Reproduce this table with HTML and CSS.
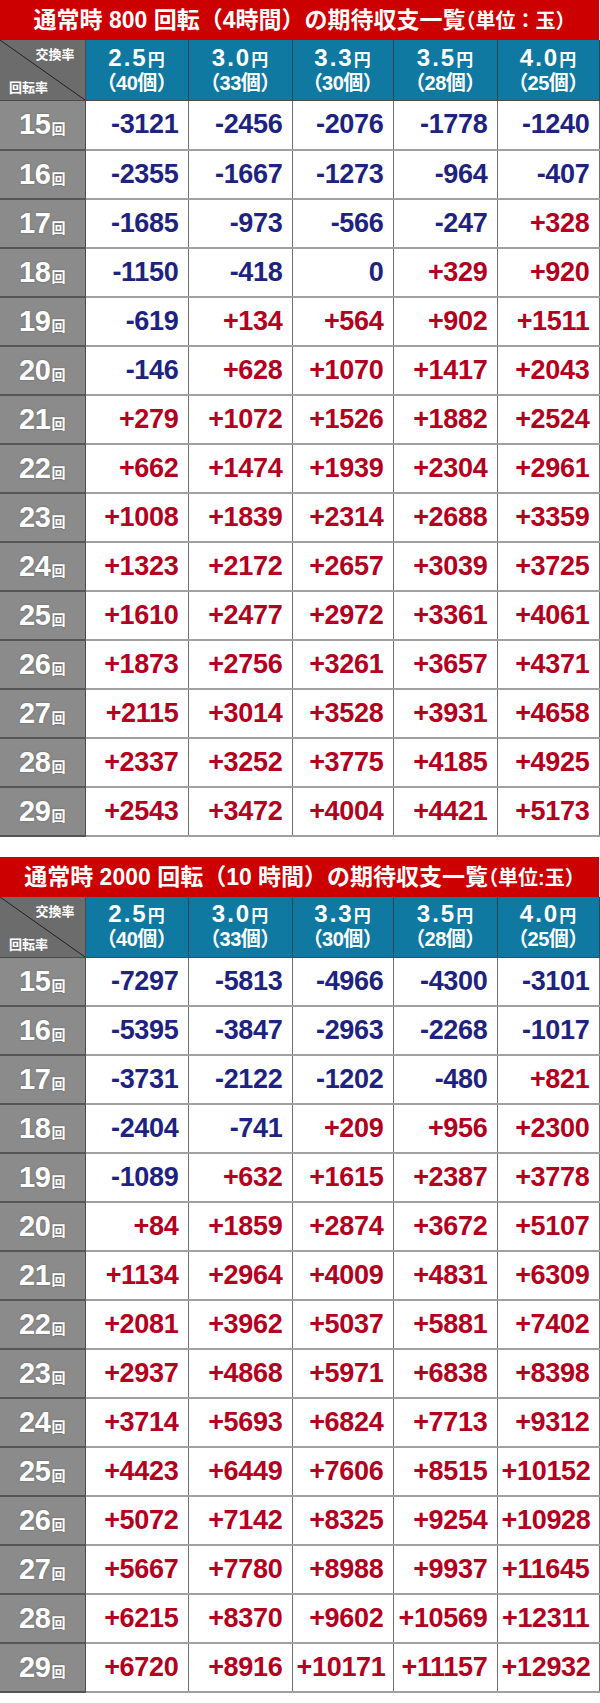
FILE: index.html
```html
<!DOCTYPE html>
<html lang="ja">
<head>
<meta charset="utf-8">
<title>期待収支一覧</title>
<link rel="stylesheet" href="styles.css">
</head>
<body>
<div class="page">
  <section class="block">
    <h2 class="title">通常時 800 回転（4時間）の期待収支一覧<span class="unit">（単位：玉）</span></h2>
    <table class="grid">
      <colgroup><col class="c0"><col class="c1"><col class="c2"><col class="c3"><col class="c4"><col class="c5"></colgroup>
      <thead>
        <tr>
          <th class="corner"><div class="corner-in"><span class="c-top">交換率</span><span class="c-bot">回転率</span></div></th>
          <th class="rate"><span class="l1"><span class="big">2.5</span><span class="yen">円</span></span><span class="l2">（40個）</span></th>
          <th class="rate"><span class="l1"><span class="big">3.0</span><span class="yen">円</span></span><span class="l2">（33個）</span></th>
          <th class="rate"><span class="l1"><span class="big">3.3</span><span class="yen">円</span></span><span class="l2">（30個）</span></th>
          <th class="rate"><span class="l1"><span class="big">3.5</span><span class="yen">円</span></span><span class="l2">（28個）</span></th>
          <th class="rate"><span class="l1"><span class="big">4.0</span><span class="yen">円</span></span><span class="l2">（25個）</span></th>
        </tr>
      </thead>
      <tbody>
        <tr><th class="lbl"><span class="n">15</span><span class="kai">回</span></th><td class="neg">-3121</td><td class="neg">-2456</td><td class="neg">-2076</td><td class="neg">-1778</td><td class="neg">-1240</td></tr>
        <tr><th class="lbl"><span class="n">16</span><span class="kai">回</span></th><td class="neg">-2355</td><td class="neg">-1667</td><td class="neg">-1273</td><td class="neg">-964</td><td class="neg">-407</td></tr>
        <tr><th class="lbl"><span class="n">17</span><span class="kai">回</span></th><td class="neg">-1685</td><td class="neg">-973</td><td class="neg">-566</td><td class="neg">-247</td><td class="pos">+328</td></tr>
        <tr><th class="lbl"><span class="n">18</span><span class="kai">回</span></th><td class="neg">-1150</td><td class="neg">-418</td><td class="neg">0</td><td class="pos">+329</td><td class="pos">+920</td></tr>
        <tr><th class="lbl"><span class="n">19</span><span class="kai">回</span></th><td class="neg">-619</td><td class="pos">+134</td><td class="pos">+564</td><td class="pos">+902</td><td class="pos">+1511</td></tr>
        <tr><th class="lbl"><span class="n">20</span><span class="kai">回</span></th><td class="neg">-146</td><td class="pos">+628</td><td class="pos">+1070</td><td class="pos">+1417</td><td class="pos">+2043</td></tr>
        <tr><th class="lbl"><span class="n">21</span><span class="kai">回</span></th><td class="pos">+279</td><td class="pos">+1072</td><td class="pos">+1526</td><td class="pos">+1882</td><td class="pos">+2524</td></tr>
        <tr><th class="lbl"><span class="n">22</span><span class="kai">回</span></th><td class="pos">+662</td><td class="pos">+1474</td><td class="pos">+1939</td><td class="pos">+2304</td><td class="pos">+2961</td></tr>
        <tr><th class="lbl"><span class="n">23</span><span class="kai">回</span></th><td class="pos">+1008</td><td class="pos">+1839</td><td class="pos">+2314</td><td class="pos">+2688</td><td class="pos">+3359</td></tr>
        <tr><th class="lbl"><span class="n">24</span><span class="kai">回</span></th><td class="pos">+1323</td><td class="pos">+2172</td><td class="pos">+2657</td><td class="pos">+3039</td><td class="pos">+3725</td></tr>
        <tr><th class="lbl"><span class="n">25</span><span class="kai">回</span></th><td class="pos">+1610</td><td class="pos">+2477</td><td class="pos">+2972</td><td class="pos">+3361</td><td class="pos">+4061</td></tr>
        <tr><th class="lbl"><span class="n">26</span><span class="kai">回</span></th><td class="pos">+1873</td><td class="pos">+2756</td><td class="pos">+3261</td><td class="pos">+3657</td><td class="pos">+4371</td></tr>
        <tr><th class="lbl"><span class="n">27</span><span class="kai">回</span></th><td class="pos">+2115</td><td class="pos">+3014</td><td class="pos">+3528</td><td class="pos">+3931</td><td class="pos">+4658</td></tr>
        <tr><th class="lbl"><span class="n">28</span><span class="kai">回</span></th><td class="pos">+2337</td><td class="pos">+3252</td><td class="pos">+3775</td><td class="pos">+4185</td><td class="pos">+4925</td></tr>
        <tr><th class="lbl"><span class="n">29</span><span class="kai">回</span></th><td class="pos">+2543</td><td class="pos">+3472</td><td class="pos">+4004</td><td class="pos">+4421</td><td class="pos">+5173</td></tr>
      </tbody>
    </table>
  </section>

  <section class="block">
    <h2 class="title">通常時 2000 回転（10 時間）の期待収支一覧<span class="unit">（単位:玉）</span></h2>
    <table class="grid">
      <colgroup><col class="c0"><col class="c1"><col class="c2"><col class="c3"><col class="c4"><col class="c5"></colgroup>
      <thead>
        <tr>
          <th class="corner"><div class="corner-in"><span class="c-top">交換率</span><span class="c-bot">回転率</span></div></th>
          <th class="rate"><span class="l1"><span class="big">2.5</span><span class="yen">円</span></span><span class="l2">（40個）</span></th>
          <th class="rate"><span class="l1"><span class="big">3.0</span><span class="yen">円</span></span><span class="l2">（33個）</span></th>
          <th class="rate"><span class="l1"><span class="big">3.3</span><span class="yen">円</span></span><span class="l2">（30個）</span></th>
          <th class="rate"><span class="l1"><span class="big">3.5</span><span class="yen">円</span></span><span class="l2">（28個）</span></th>
          <th class="rate"><span class="l1"><span class="big">4.0</span><span class="yen">円</span></span><span class="l2">（25個）</span></th>
        </tr>
      </thead>
      <tbody>
        <tr><th class="lbl"><span class="n">15</span><span class="kai">回</span></th><td class="neg">-7297</td><td class="neg">-5813</td><td class="neg">-4966</td><td class="neg">-4300</td><td class="neg">-3101</td></tr>
        <tr><th class="lbl"><span class="n">16</span><span class="kai">回</span></th><td class="neg">-5395</td><td class="neg">-3847</td><td class="neg">-2963</td><td class="neg">-2268</td><td class="neg">-1017</td></tr>
        <tr><th class="lbl"><span class="n">17</span><span class="kai">回</span></th><td class="neg">-3731</td><td class="neg">-2122</td><td class="neg">-1202</td><td class="neg">-480</td><td class="pos">+821</td></tr>
        <tr><th class="lbl"><span class="n">18</span><span class="kai">回</span></th><td class="neg">-2404</td><td class="neg">-741</td><td class="pos">+209</td><td class="pos">+956</td><td class="pos">+2300</td></tr>
        <tr><th class="lbl"><span class="n">19</span><span class="kai">回</span></th><td class="neg">-1089</td><td class="pos">+632</td><td class="pos">+1615</td><td class="pos">+2387</td><td class="pos">+3778</td></tr>
        <tr><th class="lbl"><span class="n">20</span><span class="kai">回</span></th><td class="pos">+84</td><td class="pos">+1859</td><td class="pos">+2874</td><td class="pos">+3672</td><td class="pos">+5107</td></tr>
        <tr><th class="lbl"><span class="n">21</span><span class="kai">回</span></th><td class="pos">+1134</td><td class="pos">+2964</td><td class="pos">+4009</td><td class="pos">+4831</td><td class="pos">+6309</td></tr>
        <tr><th class="lbl"><span class="n">22</span><span class="kai">回</span></th><td class="pos">+2081</td><td class="pos">+3962</td><td class="pos">+5037</td><td class="pos">+5881</td><td class="pos">+7402</td></tr>
        <tr><th class="lbl"><span class="n">23</span><span class="kai">回</span></th><td class="pos">+2937</td><td class="pos">+4868</td><td class="pos">+5971</td><td class="pos">+6838</td><td class="pos">+8398</td></tr>
        <tr><th class="lbl"><span class="n">24</span><span class="kai">回</span></th><td class="pos">+3714</td><td class="pos">+5693</td><td class="pos">+6824</td><td class="pos">+7713</td><td class="pos">+9312</td></tr>
        <tr><th class="lbl"><span class="n">25</span><span class="kai">回</span></th><td class="pos">+4423</td><td class="pos">+6449</td><td class="pos">+7606</td><td class="pos">+8515</td><td class="pos">+10152</td></tr>
        <tr><th class="lbl"><span class="n">26</span><span class="kai">回</span></th><td class="pos">+5072</td><td class="pos">+7142</td><td class="pos">+8325</td><td class="pos">+9254</td><td class="pos">+10928</td></tr>
        <tr><th class="lbl"><span class="n">27</span><span class="kai">回</span></th><td class="pos">+5667</td><td class="pos">+7780</td><td class="pos">+8988</td><td class="pos">+9937</td><td class="pos">+11645</td></tr>
        <tr><th class="lbl"><span class="n">28</span><span class="kai">回</span></th><td class="pos">+6215</td><td class="pos">+8370</td><td class="pos">+9602</td><td class="pos">+10569</td><td class="pos">+12311</td></tr>
        <tr><th class="lbl"><span class="n">29</span><span class="kai">回</span></th><td class="pos">+6720</td><td class="pos">+8916</td><td class="pos">+10171</td><td class="pos">+11157</td><td class="pos">+12932</td></tr>
      </tbody>
    </table>
  </section>
</div>
</body>
</html>
```
FILE: styles.css
```css
html, body {
  margin: 0;
  padding: 0;
  background: #ffffff;
}
body {
  font-family: "Liberation Sans", "Noto Sans CJK JP", sans-serif;
  font-weight: bold;
}
.page {
  width: 599px;
}
.block + .block {
  margin-top: 20px;
}
.title {
  margin: 0;
  height: 40px;
  background: #cc0000;
  color: #ffffff;
  font-size: 23px;
  line-height: 40px;
  font-weight: bold;
  text-align: center;
  white-space: nowrap;
  overflow: hidden;
}
.unit {
  font-size: 20px;
  margin-left: -10px;
  margin-right: -10px;
}
.grid {
  width: 599px;
  table-layout: fixed;
  border-collapse: collapse;
  border-spacing: 0;
}
.c0 { width: 85px; }
.c1 { width: 103px; }
.c2 { width: 104px; }
.c3 { width: 101px; }
.c4 { width: 104px; }
.c5 { width: 102px; }

.grid thead tr {
  height: 60px;
}
.grid th, .grid td {
  padding: 0;
}
.corner {
  background: linear-gradient(to top right, #6c6c6c calc(50% - 0.8px), #1e1e1e 50%, #6c6c6c calc(50% + 0.8px));
  border-right: 1px solid #4a4a4a;
  border-bottom: 1px solid #4a4a4a;
  color: #ffffff;
  vertical-align: top;
}
.corner-in {
  height: 60px;
  display: flex;
  flex-direction: column;
  justify-content: space-between;
  box-sizing: border-box;
  padding: 6px 10px 5px 9px;
  font-family: "Noto Sans CJK JP", sans-serif;
  font-size: 13px;
  line-height: 16px;
}
.c-top {
  align-self: flex-end;
}
.c-bot {
  align-self: flex-start;
}
.rate {
  background: #0f79a2;
  color: #ffffff;
  border-right: 1px solid #23475a;
  border-bottom: 1px solid #4a4a4a;
  text-align: center;
  vertical-align: middle;
  font-weight: bold;
}
.l1, .l2 {
  display: block;
  line-height: 23px;
  white-space: nowrap;
}
.big {
  font-size: 24px;
  letter-spacing: 2px;
}
.yen {
  font-family: "Noto Sans CJK JP", sans-serif;
  font-size: 17px;
}
.l2 {
  font-size: 20px;
  letter-spacing: -0.5px;
}

.grid tbody tr {
  height: 49px;
}
.lbl {
  background: #8b8b8b;
  color: #ffffff;
  border-right: 1px solid #4a4a4a;
  border-bottom: 2px solid #555555;
  text-align: center;
  vertical-align: middle;
  white-space: nowrap;
  text-shadow: 0 0 2px rgba(0, 0, 0, 0.35);
}
.n {
  font-size: 29px;
  letter-spacing: -0.5px;
}
.kai {
  font-family: "Noto Sans CJK JP", sans-serif;
  font-size: 14px;
  margin-left: 1px;
}
.grid td {
  background: #ffffff;
  border-right: 1px solid #707070;
  border-bottom: 2px solid #a0a0a0;
  text-align: right;
  vertical-align: middle;
  font-size: 27px;
  padding: 0 9px 0 4px;
  white-space: nowrap;
  letter-spacing: -0.3px;
}
.neg {
  color: #1e2280;
}
.pos {
  color: #b3001e;
}
```
